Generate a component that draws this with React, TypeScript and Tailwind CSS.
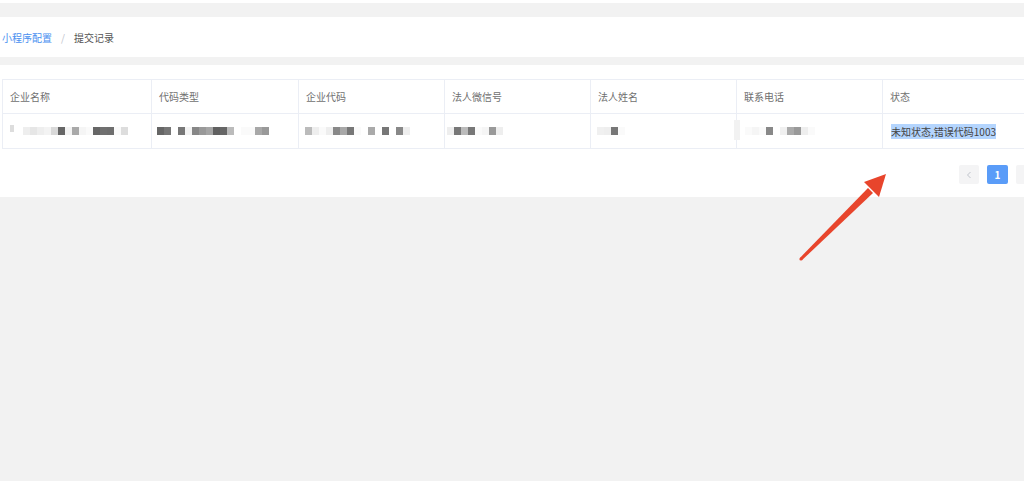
import React from "react";

const columns = ["企业名称", "代码类型", "企业代码", "法人微信号", "法人姓名", "联系电话", "状态"];

// masked values: each cell is a strip of 7px pixel blocks
const masked: { offset: number; blocks: string[] }[] = [
  {
    offset: 20,
    blocks: ["#eeeeee", "#e6e6e6", "#eeeeee", "#f3f3f3", "#d9d9d9", "#666666", "#f3f3f3", "#a9a9a9", "#f5f5f5", "#fafafa", "#666666", "#707070", "#6e6e6e", "#fafafa", "#dddddd"],
  },
  {
    offset: 5,
    blocks: ["#666666", "#767676", "#ffffff", "#777777", "#f3f3f3", "#878787", "#999999", "#a5a5a5", "#606060", "#666666", "#bbbbbb", "#ffffff", "#fafafa", "#fafafa", "#a8a8a8", "#999999"],
  },
  {
    offset: 6,
    blocks: ["#bbbbbb", "#eeeeee", "#fafafa", "#eeeeee", "#888888", "#a8a8a8", "#777777", "#fafafa", "#ffffff", "#aaaaaa", "#ffffff", "#777777", "#ffffff", "#888888", "#eeeeee"],
  },
  {
    offset: 2,
    blocks: ["#eeeeee", "#777777", "#bbbbbb", "#777777", "#fafafa", "#f5f5f5", "#999999", "#eeeeee"],
  },
  {
    offset: 6,
    blocks: ["#f0f0f0", "#eeeeee", "#777777", "#fafafa"],
  },
  {
    offset: 8,
    blocks: ["#fafafa", "#f5f5f5", "#fafafa", "#888888", "#ffffff", "#f0f0f0", "#aaaaaa", "#999999", "#eeeeee", "#fafafa"],
  },
];

function Mask({ offset, blocks }: { offset: number; blocks: string[] }) {
  return (
    <div className="flex h-[8px]" style={{ marginLeft: offset }}>
      {blocks.map((c, i) => (
        <span key={i} className="h-full w-[7px]" style={{ backgroundColor: c }} />
      ))}
    </div>
  );
}

// tapered annotation arrow, thin at the tail and wide under the head
function Arrow() {
  return (
    <svg className="pointer-events-none absolute left-0 top-0" width="1024" height="481">
      <circle cx="801" cy="259" r="1.6" fill="#e8452c" />
      <polygon points="799.9,257.9 802.1,260.1 873,193 868,188" fill="#e8452c" />
      <polygon points="886,174 864,182 879,197" fill="#e8452c" />
    </svg>
  );
}

export default function App() {
  return (
    <div
      className="relative h-[481px] w-[1024px] overflow-hidden bg-[#f2f2f2] text-[10px]"
      style={{ fontFamily: '"Noto Sans CJK SC", "Noto Sans", sans-serif' }}
    >
      <div className="h-[3px] bg-white" />

      <div className="mt-[14px] flex h-[40px] items-center bg-white pl-[2px]">
        <span className="text-[#4a90f0]">小程序配置</span>
        <span className="mx-[9px] text-[#c0c4cc]">/</span>
        <span className="text-[#555]">提交记录</span>
      </div>

      <div className="mt-[8px] w-[1044px] bg-white pb-[13px] pt-[14px]">
        <div className="ml-[2px] grid grid-cols-[149px_147px_146px_146px_146px_146px_146px] border-l border-t border-[#ebeef5]">
          {columns.map((c) => (
            <div key={c} className="flex h-[34px] items-center border-b border-r border-[#ebeef5] pl-[7px] text-[#707070]">
              {c}
            </div>
          ))}
          {masked.map((m, i) => (
            <div key={i} className="relative flex h-[35px] items-center border-b border-r border-[#ebeef5]">
              {i === 0 && <span className="absolute left-[7px] top-[11px] h-[7px] w-[4px] bg-[#ddd]" />}
              {i === 5 && <span className="absolute left-[-3px] top-[6px] h-[20px] w-[6px] bg-[#f2f2f2]" />}
              <Mask {...m} />
            </div>
          ))}
          <div className="flex h-[35px] items-center border-b border-r border-[#ebeef5] pl-[8px]">
            <span className="bg-[#b4d5fe] leading-[15px] text-[#444]">未知状态,错误代码1003</span>
          </div>
        </div>

        <div className="mt-[16px] flex justify-end gap-[8px] pr-[8px]">
          <button className="flex h-[19px] w-[20px] items-center justify-center rounded-[2px] bg-[#f4f4f5] text-[#c0c4cc]">
            <svg width="6" height="8" viewBox="0 0 6 8">
              <path d="M4.5 1 L1.5 4 L4.5 7" fill="none" stroke="#c0c4cc" strokeWidth="1" />
            </svg>
          </button>
          <button className="flex h-[19px] w-[21px] items-center justify-center rounded-[2px] bg-[#5a9cf8] font-bold text-white">
            1
          </button>
          <button className="flex h-[19px] w-[20px] items-center justify-center rounded-[2px] bg-[#f4f4f5]" />
        </div>
      </div>

      <Arrow />
    </div>
  );
}
